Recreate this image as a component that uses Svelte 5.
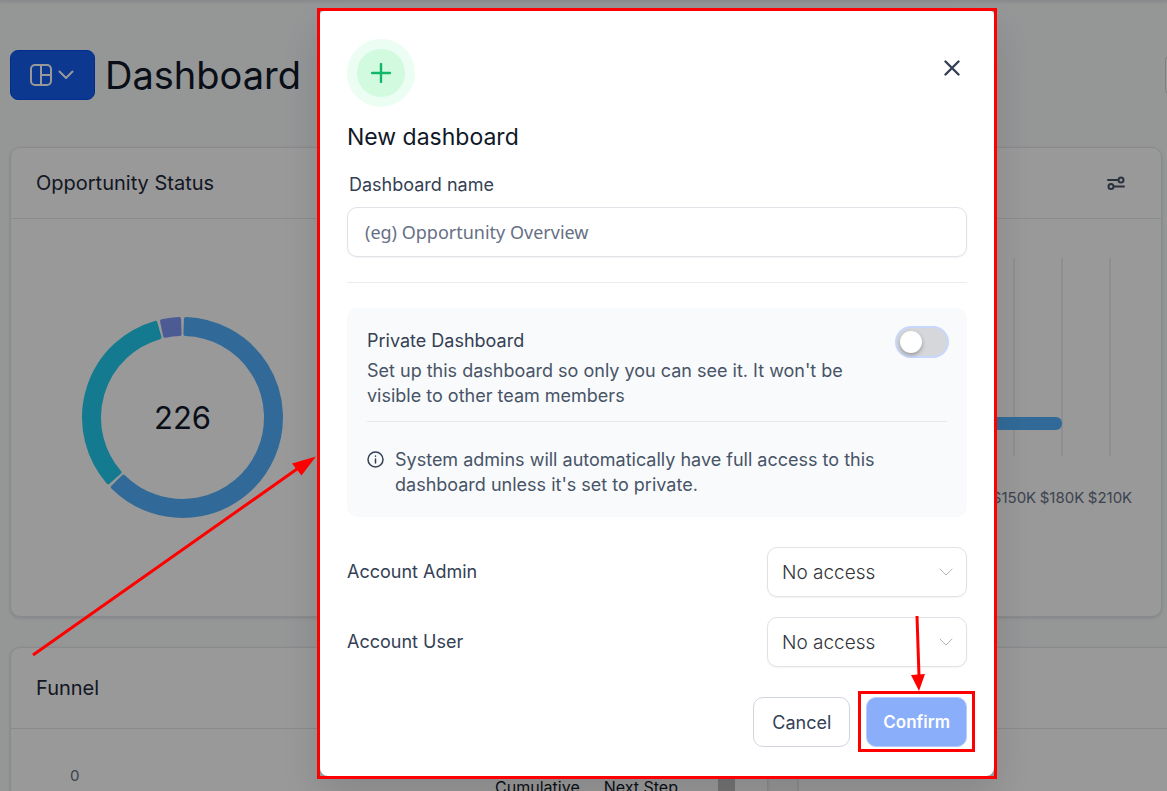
<script>
	let name = '';
	let isPrivate = false;
	let adminAccess = 'none';
	let userAccess = 'none';

	const options = [
		{ value: 'none', label: 'No access' },
		{ value: 'view', label: 'View only' },
		{ value: 'edit', label: 'Can edit' }
	];

	const segments = [
		{ from: 0, to: 227, color: '#53b1fd' },
		{ from: 227, to: 346, color: '#22ccee' },
		{ from: 346, to: 360, color: '#8098f9' }
	];

	const ticks = ['$90K', '$120K', '$150K', '$180K', '$210K'];

	function point(radius, deg) {
		let rad = (deg - 90) * Math.PI / 180;
		return (radius * Math.cos(rad)) + ' ' + (radius * Math.sin(rad));
	}

	// The rounded stroke adds 2px on every side of the arc
	function arc(seg) {
		let outer = 98.5;
		let inner = 83.5;
		let a = seg.from + 2;
		let b = seg.to - 2;
		let large = b - a > 180 ? 1 : 0;
		return `M${point(outer, a)} A${outer} ${outer} 0 ${large} 1 ${point(outer, b)} L${point(inner, b)} A${inner} ${inner} 0 ${large} 0 ${point(inner, a)} Z`;
	}
</script>

<div class="page">
	<div class="topbar"></div>
	<header>
		<button class="switcher" aria-label="Switch dashboard">
			<svg width="22" height="22" viewBox="0 0 22 22">
				<rect x="1" y="1" width="20" height="20" rx="4" />
				<path d="M11 1v20M11 11h10" />
			</svg>
			<svg width="16" height="10" viewBox="0 0 16 10">
				<path d="M1.500 1.500l6.500 6.500 6.500-6.500" />
			</svg>
		</button>
		<h1>Dashboard</h1>
		<button class="range" aria-label="Date range"></button>
	</header>

	<div class="row">
		<section class="card">
			<div class="card-head"><h2>Opportunity Status</h2></div>
			<div class="donut">
				<svg width="203" height="203" viewBox="-101.500 -101.500 203 203">
					{#each segments as seg}
						<path d={arc(seg)} fill={seg.color} stroke={seg.color} />
					{/each}
					<text y="11">226</text>
				</svg>
			</div>
		</section>
		<section class="card">
			<div class="card-head">
				<h2>Opportunity Value</h2>
				<button class="settings" aria-label="Widget settings">
					<svg width="18" height="14" viewBox="0 0 18 14">
						<path d="M1 4h10M7 10.500h10" />
						<circle cx="14" cy="4" r="2.500" />
						<circle cx="4" cy="10.500" r="2.500" />
					</svg>
				</button>
			</div>
			<div class="bars">
				<svg width="240" height="250" viewBox="0 0 240 250">
					{#each ticks as tick, i}
						<path d="M{i * 48 + 24} 0v198" />
						<text x={i * 48 + 24} y="245">{tick}</text>
					{/each}
					<rect x="0" y="159" width="168" height="13" rx="6" />
				</svg>
			</div>
		</section>
	</div>

	<div class="row lower">
		<section class="card funnel">
			<div class="card-head tall"><h2>Funnel</h2></div>
			<div class="funnel-body">
				<span class="axis">0</span>
				<table>
					<thead>
						<tr><th>Cumulative</th><th>Next Step</th></tr>
					</thead>
				</table>
				<div class="scrollbar"></div>
			</div>
		</section>
		<section class="card stages">
			<div class="card-head tall"><h2>Stage Distribution</h2></div>
		</section>
	</div>
</div>

<div class="overlay">
	<div class="frame">
		<div class="modal" role="dialog" aria-modal="true" aria-labelledby="modal-title">
			<div class="modal-top">
				<div class="badge">
					<svg width="20" height="20" viewBox="0 0 20 20"><path d="M10 1v18M1 10h18" /></svg>
				</div>
				<button class="close" aria-label="Close">
					<svg width="16" height="16" viewBox="0 0 16 16"><path d="M1.500 1.500l13 13M14.500 1.500l-13 13" /></svg>
				</button>
			</div>
			<h3 id="modal-title">New dashboard</h3>
			<label class="name-label" for="name">Dashboard name</label>
			<input id="name" class="name" type="text" placeholder="(eg) Opportunity Overview" bind:value={name} />
			<hr />

			<div class="panel">
				<div class="private">
					<div class="private-text">
						<label for="private">Private Dashboard</label>
						<p>Set up this dashboard so only you can see it. It won't be visible to other team members</p>
					</div>
					<input id="private" class="switch" type="checkbox" role="switch" aria-checked={isPrivate} bind:checked={isPrivate} />
				</div>
				<div class="info">
					<svg width="17" height="17" viewBox="0 0 17 17">
						<circle cx="8.500" cy="8.500" r="7.500" />
						<path d="M8.500 8v4M8.500 5v.2" />
					</svg>
					<p>System admins will automatically have full access to this dashboard unless it's set to private.</p>
				</div>
			</div>

			<div class="access">
				<label for="admin">Account Admin</label>
				<div class="select">
					<select id="admin" bind:value={adminAccess}>
						{#each options as option}
							<option value={option.value}>{option.label}</option>
						{/each}
					</select>
					<svg width="14" height="9" viewBox="0 0 14 9"><path d="M1 1l6 6 6-6" /></svg>
				</div>
			</div>
			<div class="access">
				<label for="user">Account User</label>
				<div class="select">
					<select id="user" bind:value={userAccess}>
						{#each options as option}
							<option value={option.value}>{option.label}</option>
						{/each}
					</select>
					<svg width="14" height="9" viewBox="0 0 14 9"><path d="M1 1l6 6 6-6" /></svg>
				</div>
			</div>

			<div class="actions">
				<button class="cancel">Cancel</button>
				<div class="confirm-wrap">
					<button class="confirm">Confirm</button>
					<div class="mark"></div>
				</div>
			</div>
		</div>
		<!-- Arrows are drawn from the top left corner of the frame -->
		<svg class="arrows" width="680" height="771" viewBox="0 0 680 771">
			<path class="line" d="M-284 647L-20 461M600 608L602 668" />
			<path d="M-1 448.500L-25 455.500L-15.500 467.500ZM594 667L608 666L602 683Z" />
		</svg>
	</div>
</div>

<style>
	:global(body) {
		margin: 0;
		font-family: Inter, 'Liberation Sans', sans-serif;
		color: #344054;
	}

	* {
		box-sizing: border-box;
	}

	h1, h2, h3, p {
		margin: 0;
		font-weight: 400;
	}

	button, input, select {
		font-family: inherit;
	}

	svg {
		display: block;
		flex: none;
		fill: none;
		stroke-linecap: round;
		stroke-linejoin: round;
	}

	.page {
		height: 100vh;
		overflow: hidden;
		background: #f9fafb;
		padding-left: 10px;
	}

	.topbar {
		height: 1px;
		margin-left: -10px;
		background: #e4e7ec;
		box-shadow: 0 1px 3px rgba(16, 24, 40, 0.2);
	}

	header {
		display: flex;
		align-items: center;
		gap: 10px;
		padding: 49px 0 47px;
	}

	.switcher {
		display: flex;
		align-items: center;
		justify-content: center;
		gap: 6px;
		width: 85px;
		height: 50px;
		border: 1px solid #004eeb;
		border-radius: 8px;
		background: #155eef;
		padding: 0 2px 0 0;
	}

	.switcher svg {
		stroke: #fff;
		stroke-width: 2;
	}

	h1 {
		font-size: 38px;
		line-height: 50px;
		color: #101828;
	}

	.range {
		flex: none;
		width: 200px;
		height: 44px;
		margin: 0 -198px 0 auto;
		border: 1px solid #d0d5dd;
		border-radius: 8px;
		background: #fff;
	}

	.row {
		display: flex;
		gap: 30px;
		padding-right: 5px;
	}

	.lower {
		margin-top: 30px;
		padding-right: 0;
	}

	.card {
		flex: 1;
		min-width: 0;
		height: 470px;
		border: 1px solid #e4e7ec;
		border-radius: 10px;
		background: #fff;
		box-shadow: 0 1px 3px rgba(16, 24, 40, 0.15);
	}

	.card-head {
		display: flex;
		align-items: center;
		justify-content: space-between;
		height: 71px;
		padding: 0 36px 0 25px;
		border-bottom: 1px solid #e4e7ec;
	}

	.tall {
		height: 81px;
	}

	h2 {
		font-size: 20px;
		line-height: 28px;
		color: #1d2939;
	}

	.settings {
		border: 0;
		background: none;
		padding: 0;
	}

	.settings svg {
		stroke: #475467;
		stroke-width: 2;
	}

	.donut {
		padding: 97px 70px;
	}

	.donut path {
		stroke-width: 4;
	}

	.donut text {
		fill: #101828;
		font-size: 31px;
		text-anchor: middle;
	}

	.bars {
		display: flex;
		justify-content: flex-end;
		padding: 39px 27px;
	}

	.bars path {
		stroke: #dcdfea;
	}

	.bars text {
		fill: #667085;
		font-size: 15px;
		text-anchor: middle;
	}

	.bars rect {
		fill: #53b1fd;
	}

	.funnel {
		flex: 0 0 758px;
	}

	.stages {
		flex: 0 0 500px;
	}

	.funnel-body {
		display: flex;
		align-items: flex-start;
		padding: 38px 32px 0 59px;
	}

	.axis {
		font-size: 15px;
		line-height: 18px;
		color: #667085;
	}

	table {
		margin: 10px 40px 0 auto;
		border-spacing: 0;
	}

	th {
		padding: 0 0 0 24px;
		font-size: 16px;
		line-height: 20px;
		font-weight: 400;
		color: #101828;
	}

	.scrollbar {
		width: 17px;
		height: 300px;
		background: #c1c1c1;
	}

	.overlay {
		position: fixed;
		inset: 0;
		display: flex;
		justify-content: center;
		align-items: flex-start;
		padding: 8px 0 0 147px;
		background: rgba(0, 0, 0, 0.4);
		overflow: hidden;
	}

	.frame {
		position: relative;
		width: 680px;
		border: 3px solid #f00;
		box-shadow: 0 20px 40px rgba(0, 0, 0, 0.12);
	}

	.modal {
		padding: 28px 27px 29px;
		border-radius: 4px 4px 8px 8px;
		background: #fff;
	}

	.modal-top {
		display: flex;
		align-items: flex-start;
		justify-content: space-between;
	}

	.badge {
		display: grid;
		place-items: center;
		width: 68px;
		height: 68px;
		border: 10px solid #ecfdf3;
		border-radius: 50%;
		background: #d1fadf;
	}

	.badge svg {
		stroke: #12b76a;
		stroke-width: 2.4;
	}

	.close {
		margin: 21px 7px 0 0;
		border: 0;
		background: none;
		padding: 0;
	}

	.close svg {
		stroke: #344054;
		stroke-width: 2.4;
	}

	h3 {
		margin-top: 12px;
		font-size: 23px;
		line-height: 36px;
		color: #101828;
	}

	.name-label {
		display: block;
		margin-top: 17px;
		padding-left: 2px;
		font-size: 18px;
		line-height: 25px;
	}

	.name {
		display: block;
		width: 100%;
		height: 50px;
		margin-top: 10px;
		padding: 0 17px;
		border: 1px solid #e0e2e8;
		border-radius: 10px;
		background: #fff;
		box-shadow: 0 1px 2px rgba(16, 24, 40, 0.05);
		font-family: 'Noto Sans', 'Open Sans', sans-serif;
		font-size: 18px;
		color: #344054;
	}

	.name::placeholder {
		color: #667085;
		opacity: 1;
	}

	hr {
		height: 1px;
		margin: 25px 0;
		border: 0;
		background: #eaecf0;
	}

	.panel {
		padding: 20px;
		border-radius: 10px;
		background: #f9fafb;
		font-size: 18px;
		line-height: 25px;
	}

	.private {
		display: flex;
		align-items: flex-start;
		justify-content: space-between;
		padding-bottom: 13px;
		border-bottom: 1px solid #e4e7ec;
	}

	.private-text {
		max-width: 500px;
	}

	.private-text label {
		display: block;
		margin-bottom: 5px;
	}

	p {
		color: #475467;
	}

	.switch {
		appearance: none;
		flex: none;
		width: 50px;
		height: 28px;
		margin: 0;
		padding: 3px;
		border-radius: 14px;
		background: #d5d7da;
		box-shadow: 0 0 0 2px #c7d7fe;
	}

	.switch::before {
		content: '';
		display: block;
		width: 22px;
		height: 22px;
		border-radius: 50%;
		background: #fff;
		box-shadow: 0 2px 4px rgba(0, 0, 0, 0.3);
	}

	.switch:checked {
		background: #155eef;
	}

	.switch:checked::before {
		margin-left: auto;
	}

	.info {
		display: flex;
		gap: 11px;
		padding-top: 25px;
	}

	.info svg {
		margin-top: 4px;
		stroke: #344054;
		stroke-width: 1.5;
	}

	.access {
		display: flex;
		align-items: center;
		justify-content: space-between;
		margin-top: 20px;
		font-size: 18px;
		line-height: 24px;
	}

	.panel + .access {
		margin-top: 30px;
	}

	.select {
		position: relative;
		width: 200px;
	}

	select {
		appearance: none;
		display: block;
		width: 100%;
		height: 50px;
		padding: 0 14px;
		border: 1px solid #e0e2e8;
		border-radius: 10px;
		background: #fff;
		box-shadow: 0 1px 2px rgba(16, 24, 40, 0.05);
		font-size: 19px;
		font-weight: 300;
		color: #333639;
	}

	.select svg {
		position: absolute;
		right: 14px;
		top: 21px;
		stroke: #b4b4b4;
		pointer-events: none;
	}

	.actions {
		display: flex;
		justify-content: flex-end;
		gap: 16px;
		margin-top: 30px;
	}

	.actions button {
		display: block;
		height: 50px;
		padding: 0 18px;
		border: 1px solid #d0d5dd;
		border-radius: 10px;
		background: #fff;
		font-size: 18px;
		color: #344054;
	}

	.confirm-wrap {
		position: relative;
	}

	.actions .confirm {
		padding: 0 16px;
		border-color: #b2ccff;
		background: #8aaefa;
		font-size: 17px;
		font-weight: 600;
		color: #fff;
	}

	.mark {
		position: absolute;
		inset: -6px -8px -5px;
		border: 3px solid #f00;
		pointer-events: none;
	}

	.arrows {
		position: absolute;
		left: -3px;
		top: -3px;
		overflow: visible;
		fill: #f00;
		pointer-events: none;
	}

	.line {
		stroke: #f00;
		stroke-width: 3;
		stroke-linecap: butt;
	}
</style>
